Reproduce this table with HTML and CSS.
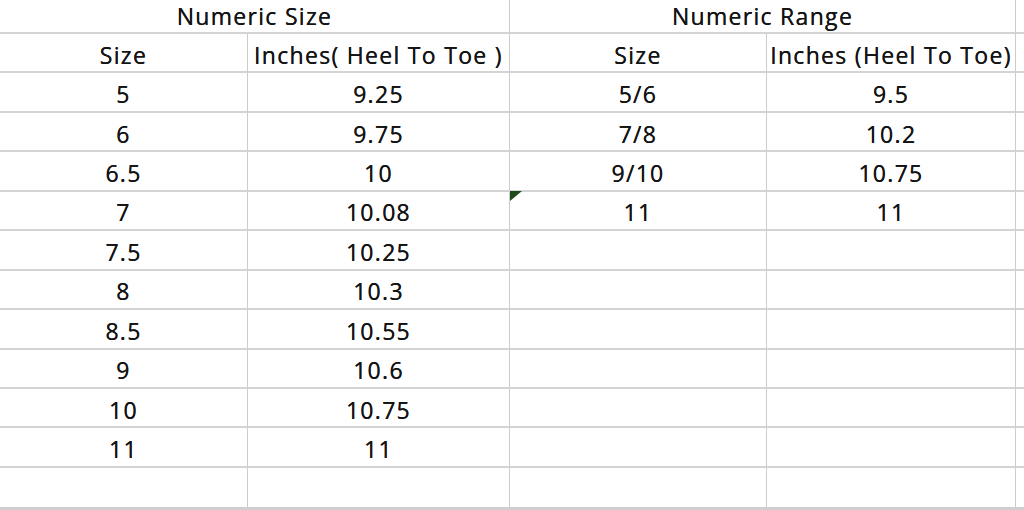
FILE: index.html
```html
<!DOCTYPE html>
<html>
<head>
<meta charset="utf-8">
<link rel="stylesheet" href="styles.css">
</head>
<body>
<div class="sheet">
  <div class="cell title span2">Numeric Size</div>
  <div class="cell title span2">Numeric Range</div>
  <div class="cell edge"></div>

  <div class="cell">Size</div>
  <div class="cell">Inches( Heel To Toe )</div>
  <div class="cell">Size</div>
  <div class="cell">Inches (Heel To Toe)</div>
  <div class="cell edge"></div>

  <div class="cell">5</div><div class="cell">9.25</div><div class="cell">5/6</div><div class="cell">9.5</div><div class="cell edge"></div>
  <div class="cell">6</div><div class="cell">9.75</div><div class="cell">7/8</div><div class="cell">10.2</div><div class="cell edge"></div>
  <div class="cell">6.5</div><div class="cell">10</div><div class="cell">9/10</div><div class="cell">10.75</div><div class="cell edge"></div>
  <div class="cell">7</div><div class="cell">10.08</div><div class="cell">11<span class="flag"></span></div><div class="cell">11</div><div class="cell edge"></div>
  <div class="cell">7.5</div><div class="cell">10.25</div><div class="cell"></div><div class="cell"></div><div class="cell edge"></div>
  <div class="cell">8</div><div class="cell">10.3</div><div class="cell"></div><div class="cell"></div><div class="cell edge"></div>
  <div class="cell">8.5</div><div class="cell">10.55</div><div class="cell"></div><div class="cell"></div><div class="cell edge"></div>
  <div class="cell">9</div><div class="cell">10.6</div><div class="cell"></div><div class="cell"></div><div class="cell edge"></div>
  <div class="cell">10</div><div class="cell">10.75</div><div class="cell"></div><div class="cell"></div><div class="cell edge"></div>
  <div class="cell">11</div><div class="cell">11</div><div class="cell"></div><div class="cell"></div><div class="cell edge"></div>
  <div class="cell"></div><div class="cell"></div><div class="cell"></div><div class="cell"></div><div class="cell edge"></div>
</div>
</body>
</html>
```

FILE: styles.css
```css
html, body {
  margin: 0;
  padding: 0;
  background: #ffffff;
}
body {
  width: 1024px;
  height: 510px;
  overflow: hidden;
}
.sheet {
  display: grid;
  grid-template-columns: 248px 262px 257px 249px 8px;
  grid-template-rows: 34px repeat(12, 39.45px);
  height: 507px;
  border-bottom: 3px solid #cfcfcf;
  font-family: "Open Sans", "Noto Sans", sans-serif;
  font-size: 23px;
  letter-spacing: 1.3px;
  color: #141414;
  text-shadow: 0 0 0.4px #141414;
}
.cell {
  position: relative;
  display: flex;
  align-items: center;
  justify-content: center;
  padding-top: 4px;
  box-sizing: border-box;
  border-right: 1.5px solid #cccccc;
  border-bottom: 2px solid #d4d4d4;
  white-space: nowrap;
}
.title {
  padding-top: 0;
}
.span2 {
  grid-column: span 2;
}
.edge {
  border-right: 0;
}
.sheet > .cell:nth-last-child(-n+5) {
  border-bottom: 0;
}
.flag {
  position: absolute;
  left: 0;
  top: -1px;
  width: 0;
  height: 0;
  border-top: 10px solid #1d4d1d;
  border-right: 12px solid transparent;
}
```
